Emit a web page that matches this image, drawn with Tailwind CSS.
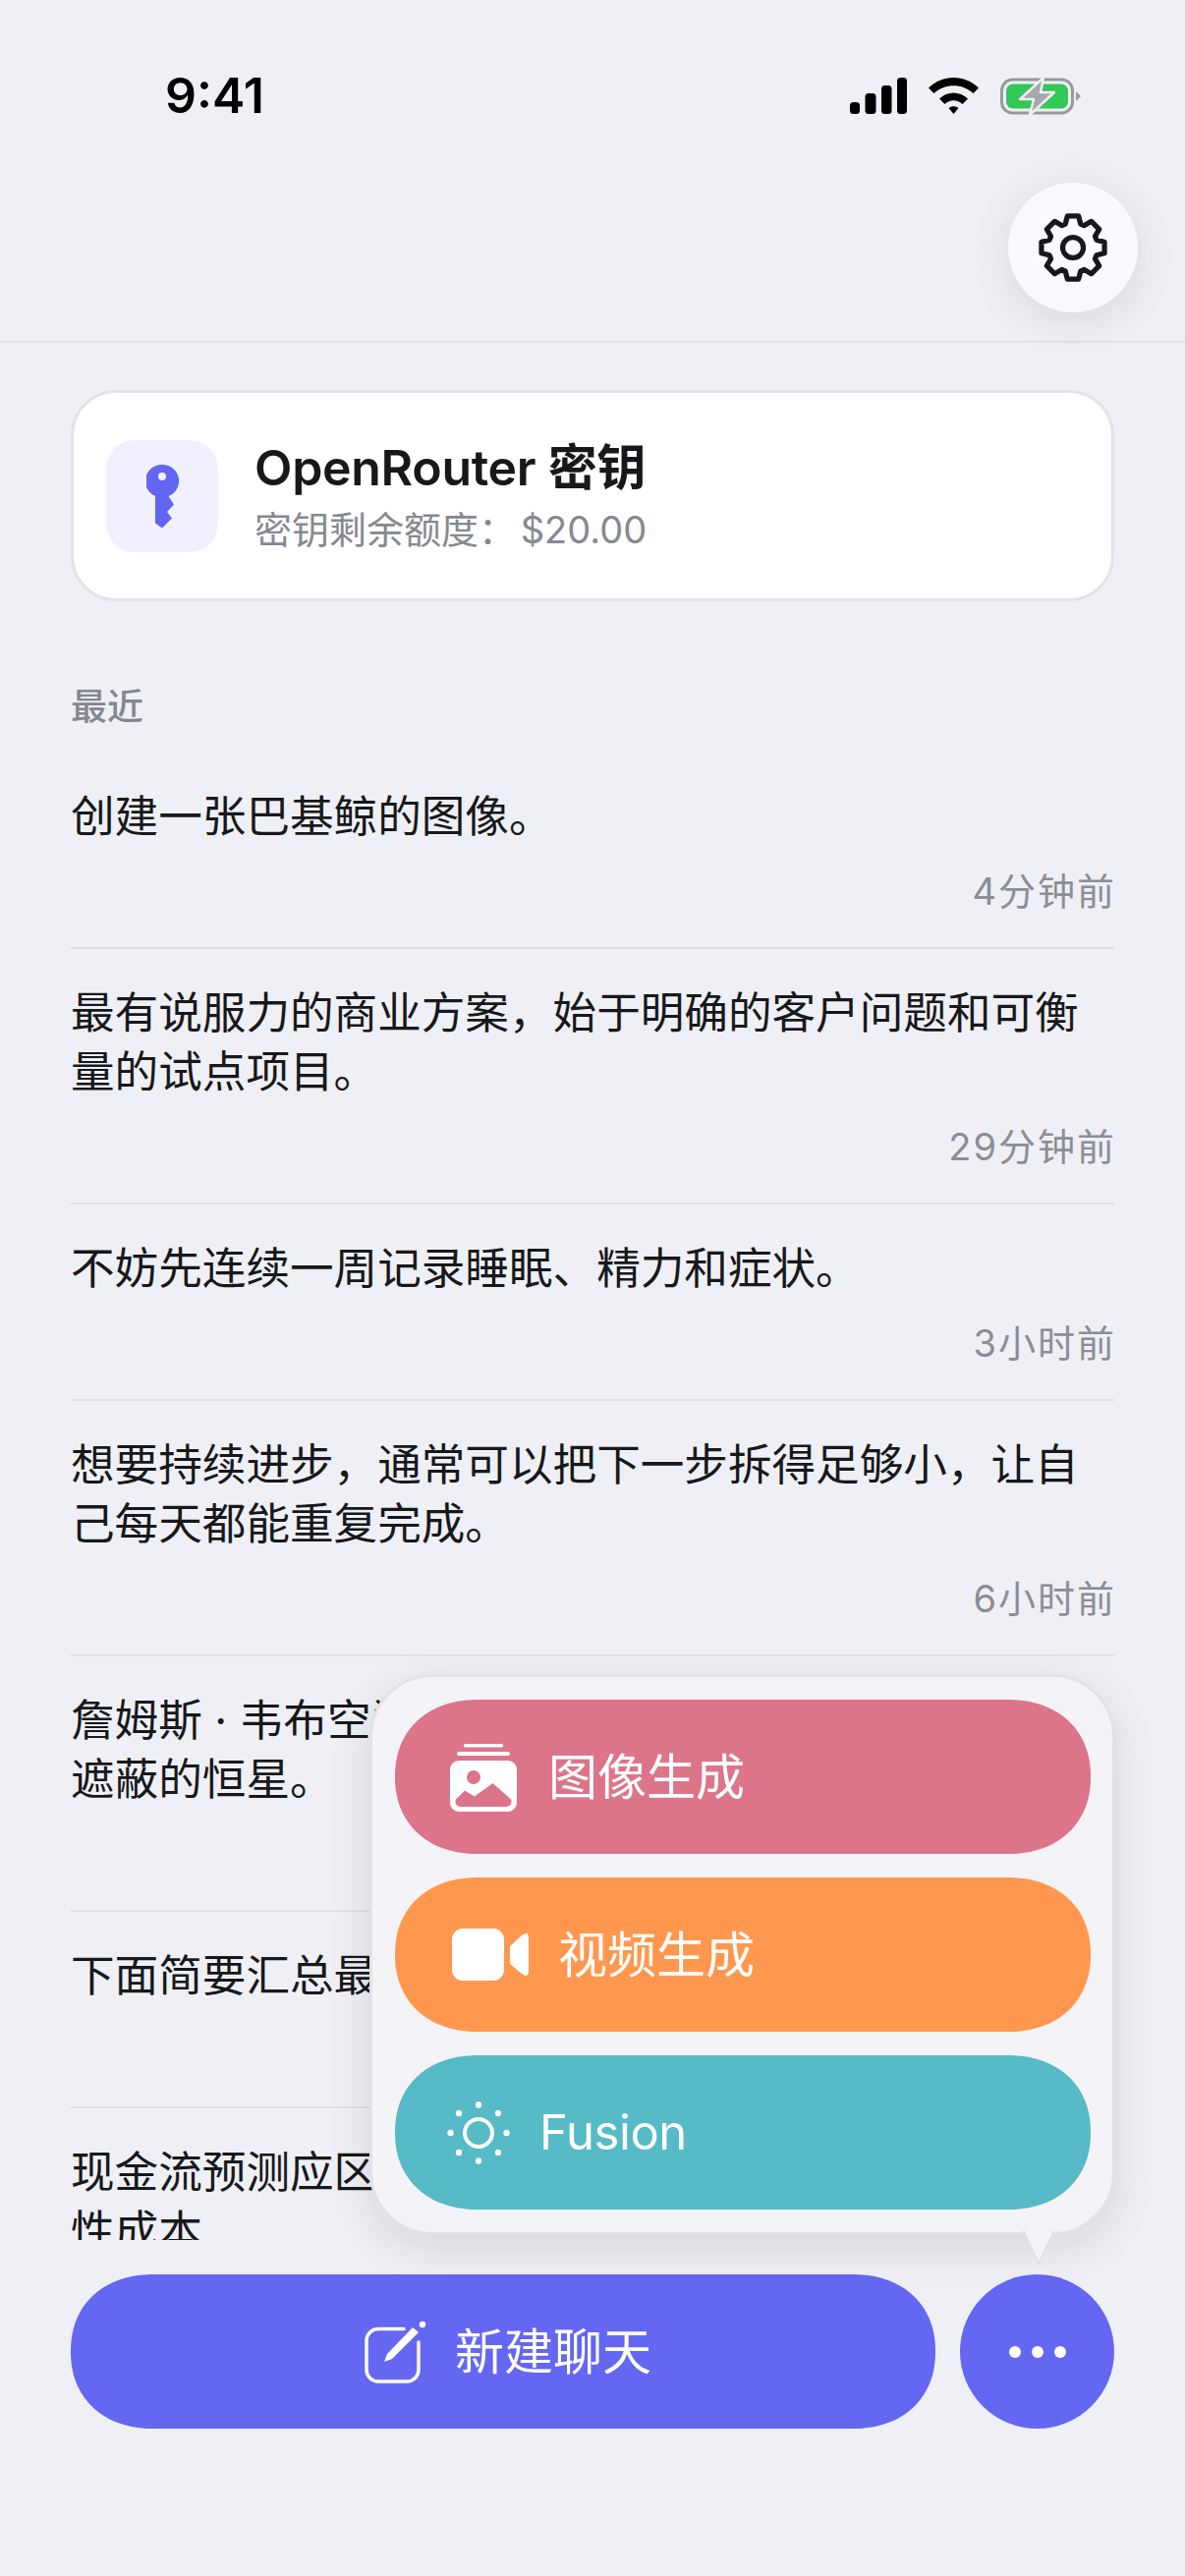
<!DOCTYPE html>
<html lang="zh-CN">
<head>
    <meta charset="UTF-8" />
    <meta name="viewport" content="width=device-width, initial-scale=1.0" />
    <title>Chats</title>
    <script src="https://cdn.jsdelivr.net/npm/@tailwindcss/browser@4"></script>
</head>
<body class="bg-[#eff0f5] font-['Inter','Noto_Sans_CJK_SC',sans-serif]">
    <div class="relative w-[1206px] h-[2622px] overflow-hidden flex flex-col text-[#17181b]">

        <!-- status bar -->
        <div class="h-[150px] shrink-0 flex justify-between pt-[72px] pl-[168px] pr-[106px]">
            <span class="text-[50px] leading-[50px] font-semibold text-black">9:41</span>
            <div class="flex items-start gap-[22px] pt-[7px]">
                <svg class="w-[58px] h-[37px]" viewBox="0 0 58 37" fill="#000">
                    <rect x="0" y="25" width="10" height="12" rx="3.5" />
                    <rect x="15.5" y="16" width="11" height="21" rx="3.5" />
                    <rect x="32" y="8" width="10.5" height="29" rx="3.5" />
                    <rect x="48" y="0" width="10" height="37" rx="3.5" />
                </svg>
                <svg class="w-[51px] h-[37px]" viewBox="0 0 51 37" fill="#000">
                    <path d="M0 10.5C14-3.5 37-3.5 51 10.5L45.5 16C34.5 5.5 16.5 5.5 5.5 16Z" />
                    <path d="M11 21.5C19 13.5 32 13.5 40 21.5L34.5 27C29 22 22 22 16.5 27Z" />
                    <path d="M20.5 31C23.5 28.5 27.5 28.5 30.5 31L25.5 37Z" />
                </svg>
                <svg class="w-[82px] h-[38px]" viewBox="0 0 82 38">
                    <rect x="1.5" y="2" width="72" height="34" rx="11" fill="none" stroke="#98999d" stroke-width="3" />
                    <path d="M77 14L82 19L77 24Z" fill="#98999d" />
                    <rect x="6" y="6.5" width="63" height="25" rx="7" fill="#34c759" />
                    <path d="M44 0L20 22H34L30 38L55 15H41Z" fill="#a7a8ac" stroke="#eff0f5" stroke-width="2.5" stroke-linejoin="round" />
                </svg>
            </div>
        </div>

        <!-- top bar -->
        <div class="h-[199px] shrink-0 flex justify-end pt-[36px] pr-[48px] border-b-2 border-[#e2e3e8]">
            <button class="w-[132px] h-[132px] rounded-full bg-[#f9faff] flex items-center justify-center shadow-[0_8px_44px_rgba(30,32,50,0.11)]">
                <svg class="w-[84px] h-[84px]" viewBox="-40 -40 80 80" fill="none" stroke="#17181b" stroke-width="5" stroke-linejoin="round">
                    <path d="M30.53 -5.38L30.53 5.38L22.83 7.42L21.38 10.9L25.39 17.78L17.78 25.39L10.9 21.38L7.42 22.83L5.38 30.53L-5.38 30.53L-7.42 22.83L-10.9 21.38L-17.78 25.39L-25.39 17.78L-21.38 10.9L-22.83 7.42L-30.53 5.38L-30.53 -5.38L-22.83 -7.42L-21.38 -10.9L-25.39 -17.78L-17.78 -25.39L-10.9 -21.38L-7.42 -22.83L-5.38 -30.53L5.38 -30.53L7.42 -22.83L10.9 -21.38L17.78 -25.39L25.39 -17.78L21.38 -10.9L22.83 -7.42Z" />
                    <circle cx="0" cy="0" r="10" />
                </svg>
            </button>
        </div>

        <!-- scrolling content -->
        <div class="flex-1 min-h-0 overflow-hidden px-[72px] pt-[48px]">
            <div class="h-[215px] rounded-[46px] bg-white border-[3px] border-[#e2e3e8] flex items-center gap-[37px] pl-[33px]">
                <div class="w-[114px] h-[114px] rounded-[34px] [corner-shape:superellipse(1.3)] bg-[#f0f0ff] flex items-center justify-center">
                    <svg class="w-[33px] h-[65px] mt-[2px]" viewBox="0 0 33 65" fill="#6366f1" fill-rule="evenodd">
                        <path d="M16.5 0A16.5 16.5 0 0 1 23 31.7V33L28 40.5L21 48L26 54.5L16 64.5L9 59.5V31.7A16.5 16.5 0 0 1 16.5 0ZM16 8A4 4 0 1 0 16 16A4 4 0 1 0 16 8Z" />
                    </svg>
                </div>
                <div class="flex flex-col gap-[8px]">
                    <div class="text-[50px] leading-[60px] font-semibold tracking-[-0.3px]">OpenRouter 密钥</div>
                    <div class="text-[38px] leading-[50px] text-[#868990] [word-spacing:-6px]">密钥剩余额度： $20.00</div>
                </div>
            </div>

            <div class="mt-[83px] text-[37px] leading-[50px] font-medium text-[#85878e]">最近</div>

            <div class="mt-[21px] flex flex-col">
                <div class="pt-[35px] pb-[34px] border-b-2 border-[#dfe0e5]">
                    <p class="text-[44.6px] leading-[60px]">创建一张巴基鲸的图像。</p>
                    <p class="mt-[23px] text-right text-[38px] leading-[46px] tracking-[2px] mr-[-2px] text-[#8c8e95]">4分钟前</p>
                </div>
                <div class="pt-[35px] pb-[34px] border-b-2 border-[#dfe0e5]">
                    <p class="text-[44.6px] leading-[60px]">最有说服力的商业方案，始于明确的客户问题和可衡量的试点项目。</p>
                    <p class="mt-[23px] text-right text-[38px] leading-[46px] tracking-[2px] mr-[-2px] text-[#8c8e95]">29分钟前</p>
                </div>
                <div class="pt-[35px] pb-[34px] border-b-2 border-[#dfe0e5]">
                    <p class="text-[44.6px] leading-[60px]">不妨先连续一周记录睡眠、精力和症状。</p>
                    <p class="mt-[23px] text-right text-[38px] leading-[46px] tracking-[2px] mr-[-2px] text-[#8c8e95]">3小时前</p>
                </div>
                <div class="pt-[35px] pb-[34px] border-b-2 border-[#dfe0e5]">
                    <p class="text-[44.6px] leading-[60px]">想要持续进步，通常可以把下一步拆得足够小，让自己每天都能重复完成。</p>
                    <p class="mt-[23px] text-right text-[38px] leading-[46px] tracking-[2px] mr-[-2px] text-[#8c8e95]">6小时前</p>
                </div>
                <div class="pt-[35px] pb-[34px] border-b-2 border-[#dfe0e5]">
                    <p class="text-[44.6px] leading-[60px]">詹姆斯 · 韦布空间望远镜观测到一颗被尘埃<br />遮蔽的恒星。</p>
                    <p class="mt-[23px] text-right text-[38px] leading-[46px] tracking-[2px] mr-[-2px] text-[#8c8e95]">昨天</p>
                </div>
                <div class="pt-[35px] pb-[34px] border-b-2 border-[#dfe0e5]">
                    <p class="text-[44.6px] leading-[60px]">下面简要汇总最近的主要进展。</p>
                    <p class="mt-[23px] text-right text-[38px] leading-[46px] tracking-[2px] mr-[-2px] text-[#8c8e95]">昨天</p>
                </div>
                <div class="pt-[35px]">
                    <p class="text-[44.6px] leading-[60px]">现金流预测应区分经常性收入和一次性支出及<br />性成本</p>
                </div>
            </div>
        </div>

        <!-- bottom actions -->
        <div class="shrink-0 h-[342px] flex gap-[25px] pl-[72px] pr-[72px] pt-[35px]">
            <button class="flex-1 h-[157px] rounded-[84px/78px] [corner-shape:superellipse(1.12)] bg-[#6467f2] flex items-center justify-center gap-[26px] pl-[10px] text-white">
                <svg class="w-[66px] h-[64px]" viewBox="0 0 66 64" fill="none" stroke="#fff">
                    <path d="M40 8.5H14A12 12 0 0 0 2 20.5V50A12 12 0 0 0 14 62H43A12 12 0 0 0 55 50V22" stroke-width="3.5" stroke-linecap="round" />
                    <path d="M20 42L23 34L49 7L55 12L28 39Z" fill="#fff" stroke="none" />
                    <circle cx="59" cy="4" r="3.2" fill="#fff" stroke="none" />
                </svg>
                <span class="text-[50px] leading-[60px]">新建聊天</span>
            </button>
            <button class="w-[157px] h-[157px] rounded-full bg-[#6467f2] flex items-center justify-center gap-[11px]">
                <span class="w-[12px] h-[12px] rounded-full bg-white"></span>
                <span class="w-[12px] h-[12px] rounded-full bg-white"></span>
                <span class="w-[12px] h-[12px] rounded-full bg-white"></span>
            </button>
        </div>

        <!-- create menu popover -->
        <div class="absolute left-[376px] top-[1704px] w-[759px] h-[571px] rounded-[64px] bg-[#f4f4f8] border-[3px] border-[#e1e2e7] pt-[23px] pl-[23px] pr-[22px] flex flex-col gap-[24px] shadow-[0_12px_44px_rgba(30,32,50,0.12)]">
            <button class="w-full h-[157px] shrink-0 rounded-[84px/78px] [corner-shape:superellipse(1.12)] bg-[#dc758a] flex items-center gap-[32px] pl-[56px] text-white">
                <svg class="w-[68px] h-[70px]" viewBox="0 0 68 70" fill="#fff">
                    <rect x="14" y="1" width="40" height="3.5" rx="1.5" />
                    <rect x="7" y="9" width="54" height="4" rx="2" />
                    <rect x="0" y="18" width="68" height="52" rx="9" />
                    <circle cx="24" cy="35" r="7" fill="#dc758a" />
                    <path d="M5.5 58L15 48.5L25 54.5L43.5 41L62.5 58V60A5 5 0 0 1 57.5 65H10.5A5 5 0 0 1 5.5 60Z" fill="#dc758a" />
                </svg>
                <span class="text-[50px] leading-[60px]">图像生成</span>
            </button>
            <button class="w-full h-[157px] shrink-0 rounded-[84px/78px] [corner-shape:superellipse(1.12)] bg-[#ff984e] flex items-center gap-[30px] pl-[58px] text-white">
                <svg class="w-[78px] h-[53px]" viewBox="0 0 78 53" fill="#fff">
                    <rect x="0" y="0" width="53" height="53" rx="11" />
                    <path d="M59 18L71 7Q78 2 78 10V43Q78 51 71 46L59 36Z" />
                </svg>
                <span class="text-[50px] leading-[60px]">视频生成</span>
            </button>
            <button class="w-full h-[157px] shrink-0 rounded-[84px/78px] [corner-shape:superellipse(1.12)] bg-[#56bac7] flex items-center gap-[22px] pl-[45px] text-white">
                <svg class="w-[80px] h-[80px]" viewBox="0 0 80 80" fill="#fff">
                    <circle cx="40" cy="40" r="14" fill="none" stroke="#fff" stroke-width="4" />
                    <circle cx="40" cy="11.5" r="3.2" />
                    <circle cx="60" cy="20" r="3.2" />
                    <circle cx="68.5" cy="40" r="3.2" />
                    <circle cx="60" cy="60" r="3.2" />
                    <circle cx="40" cy="68.5" r="3.2" />
                    <circle cx="20" cy="60" r="3.2" />
                    <circle cx="11.5" cy="40" r="3.2" />
                    <circle cx="20" cy="20" r="3.2" />
                </svg>
                <span class="text-[49px] leading-[60px] tracking-[-0.4px]">Fusion</span>
            </button>
            <svg class="absolute left-[662px] top-[563px] w-[32px] h-[36px]" viewBox="0 0 32 36">
                <path d="M0 0H32L16 34Z" fill="#f4f4f8" />
                <path d="M0 0L16 34L32 0" fill="none" stroke="#e1e2e7" stroke-width="2" />
                <rect x="3" y="-3" width="26" height="6" fill="#f4f4f8" />
            </svg>
        </div>
    </div>
</body>
</html>
